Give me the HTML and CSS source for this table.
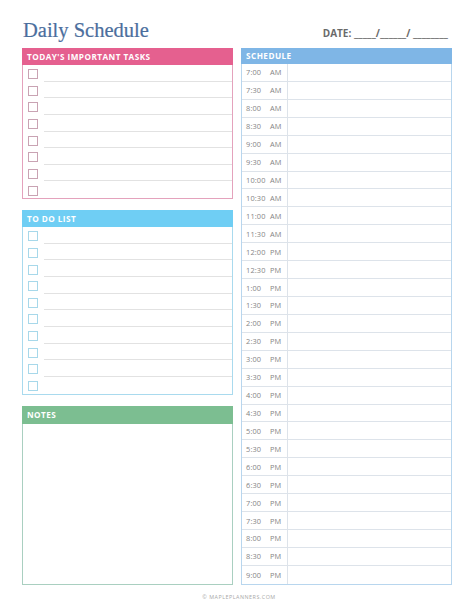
FILE: index.html
```html
<!DOCTYPE html>
<html>
<head>
<meta charset="utf-8">
<link rel="stylesheet" href="styles.css">
</head>
<body>
<div class="page">
  <header class="top">
    <h1 class="title">Daily Schedule</h1>
    <div class="date">DATE: <span class="blank">_____</span>/<span class="blank">______</span>/ <span class="blank">________</span></div>
  </header>
  <div class="cols">
    <div class="left">
      <section class="box tasks">
        <div class="head">TODAY'S IMPORTANT TASKS</div>
        <div class="body">
          <div class="row"><span class="cb"></span><span class="line"></span></div>
          <div class="row"><span class="cb"></span><span class="line"></span></div>
          <div class="row"><span class="cb"></span><span class="line"></span></div>
          <div class="row"><span class="cb"></span><span class="line"></span></div>
          <div class="row"><span class="cb"></span><span class="line"></span></div>
          <div class="row"><span class="cb"></span><span class="line"></span></div>
          <div class="row"><span class="cb"></span><span class="line"></span></div>
          <div class="row"><span class="cb"></span><span class="line"></span></div>
        </div>
      </section>
      <section class="box todo">
        <div class="head">TO DO LIST</div>
        <div class="body">
          <div class="row"><span class="cb"></span><span class="line"></span></div>
          <div class="row"><span class="cb"></span><span class="line"></span></div>
          <div class="row"><span class="cb"></span><span class="line"></span></div>
          <div class="row"><span class="cb"></span><span class="line"></span></div>
          <div class="row"><span class="cb"></span><span class="line"></span></div>
          <div class="row"><span class="cb"></span><span class="line"></span></div>
          <div class="row"><span class="cb"></span><span class="line"></span></div>
          <div class="row"><span class="cb"></span><span class="line"></span></div>
          <div class="row"><span class="cb"></span><span class="line"></span></div>
          <div class="row"><span class="cb"></span><span class="line"></span></div>
        </div>
      </section>
      <section class="box notes">
        <div class="head">NOTES</div>
        <div class="body"></div>
      </section>
    </div>
    <section class="box schedule">
      <div class="head">SCHEDULE</div>
      <div class="body">
        <div class="srow"><span class="time"><span class="hm">7:00</span>AM</span><span class="slot"></span></div>
        <div class="srow"><span class="time"><span class="hm">7:30</span>AM</span><span class="slot"></span></div>
        <div class="srow"><span class="time"><span class="hm">8:00</span>AM</span><span class="slot"></span></div>
        <div class="srow"><span class="time"><span class="hm">8:30</span>AM</span><span class="slot"></span></div>
        <div class="srow"><span class="time"><span class="hm">9:00</span>AM</span><span class="slot"></span></div>
        <div class="srow"><span class="time"><span class="hm">9:30</span>AM</span><span class="slot"></span></div>
        <div class="srow"><span class="time"><span class="hm">10:00</span>AM</span><span class="slot"></span></div>
        <div class="srow"><span class="time"><span class="hm">10:30</span>AM</span><span class="slot"></span></div>
        <div class="srow"><span class="time"><span class="hm">11:00</span>AM</span><span class="slot"></span></div>
        <div class="srow"><span class="time"><span class="hm">11:30</span>AM</span><span class="slot"></span></div>
        <div class="srow"><span class="time"><span class="hm">12:00</span>PM</span><span class="slot"></span></div>
        <div class="srow"><span class="time"><span class="hm">12:30</span>PM</span><span class="slot"></span></div>
        <div class="srow"><span class="time"><span class="hm">1:00</span>PM</span><span class="slot"></span></div>
        <div class="srow"><span class="time"><span class="hm">1:30</span>PM</span><span class="slot"></span></div>
        <div class="srow"><span class="time"><span class="hm">2:00</span>PM</span><span class="slot"></span></div>
        <div class="srow"><span class="time"><span class="hm">2:30</span>PM</span><span class="slot"></span></div>
        <div class="srow"><span class="time"><span class="hm">3:00</span>PM</span><span class="slot"></span></div>
        <div class="srow"><span class="time"><span class="hm">3:30</span>PM</span><span class="slot"></span></div>
        <div class="srow"><span class="time"><span class="hm">4:00</span>PM</span><span class="slot"></span></div>
        <div class="srow"><span class="time"><span class="hm">4:30</span>PM</span><span class="slot"></span></div>
        <div class="srow"><span class="time"><span class="hm">5:00</span>PM</span><span class="slot"></span></div>
        <div class="srow"><span class="time"><span class="hm">5:30</span>PM</span><span class="slot"></span></div>
        <div class="srow"><span class="time"><span class="hm">6:00</span>PM</span><span class="slot"></span></div>
        <div class="srow"><span class="time"><span class="hm">6:30</span>PM</span><span class="slot"></span></div>
        <div class="srow"><span class="time"><span class="hm">7:00</span>PM</span><span class="slot"></span></div>
        <div class="srow"><span class="time"><span class="hm">7:30</span>PM</span><span class="slot"></span></div>
        <div class="srow"><span class="time"><span class="hm">8:00</span>PM</span><span class="slot"></span></div>
        <div class="srow"><span class="time"><span class="hm">8:30</span>PM</span><span class="slot"></span></div>
        <div class="srow"><span class="time"><span class="hm">9:00</span>PM</span><span class="slot"></span></div>
      </div>
    </section>
  </div>
  <footer class="foot">© MAPLEPLANNERS.COM</footer>
</div>
</body>
</html>
```

FILE: styles.css
```css
* { box-sizing: border-box; }
html, body { margin: 0; padding: 0; background: #fff; }
body { font-family: "Open Sans", "Liberation Sans", sans-serif; }

.page {
  width: 474px;
  height: 613px;
  padding: 18px 22px 0 22px;
}

.top {
  display: flex;
  justify-content: space-between;
  align-items: baseline;
  height: 30px;
}

.title {
  margin: 0 0 0 1px;
  font-family: "Liberation Serif", "DejaVu Serif", serif;
  font-weight: normal;
  font-size: 20.5px;
  color: #4b6e9d;
  line-height: 24px;
  -webkit-text-stroke: 0.2px #4b6e9d;
}

.date {
  font-size: 10px;
  font-weight: bold;
  color: #6a6a6a;
  margin-right: 4px;
}
.date .blank { font-weight: normal; color: #555; }

.cols {
  display: grid;
  grid-template-columns: 211px 211px;
  column-gap: 8px;
  height: 536px;
}

.left {
  display: flex;
  flex-direction: column;
  gap: 11px;
}

.box {
  display: flex;
  flex-direction: column;
}

.head {
  height: 17px;
  line-height: 17px;
  padding-left: 5px;
  color: #fff;
  font-weight: bold;
  font-size: 8.2px;
  letter-spacing: 0.45px;
}

.body {
  border: 1px solid #ccc;
  border-top: none;
}

.tasks .head { background: #e5608f; }
.tasks .body { border-color: #e4a2bc; }
.tasks .cb { border-color: #c9a3b3; }

.todo .head { background: #6fcef4; }
.todo .body { border-color: #a9daee; }
.todo .cb { border-color: #a7d8ea; }

.notes { flex: 1; }
.notes .head { background: #7cbe91; height: 18px; line-height: 18px; }
.notes .body { flex: 1; border-color: #a9cfc0; }

.row {
  display: flex;
  align-items: flex-end;
  height: 16.65px;
  padding-left: 5px;
}
.cb {
  width: 10px;
  height: 10px;
  border: 1px solid #bbb;
  margin-bottom: 2.5px;
  flex: none;
}
.line {
  flex: 1;
  align-self: stretch;
  margin-left: 6px;
  border-bottom: 1px solid #e2e2e2;
}
.row:last-child .line { border-bottom: none; }

.schedule .head { background: #7fb6e6; height: 16px; line-height: 16px; }
.schedule .body { border-color: #b8d6ee; }

.srow {
  display: flex;
  height: 17.93px;
  border-bottom: 1px solid #dde3ea;
}
.srow:last-child { border-bottom: none; }
.time {
  width: 46px;
  flex: none;
  border-right: 1px solid #dde3ea;
  padding-left: 4px;
  font-size: 7.4px;
  color: #858585;
  display: flex;
  align-items: center;
  letter-spacing: 0.15px;
}
.hm { display: inline-block; width: 24px; }
.slot { flex: 1; }

.foot {
  text-align: center;
  font-size: 5.4px;
  color: #a8a8a8;
  letter-spacing: 0.5px;
  margin-top: 9px;
  padding-left: 4px;
}
```
